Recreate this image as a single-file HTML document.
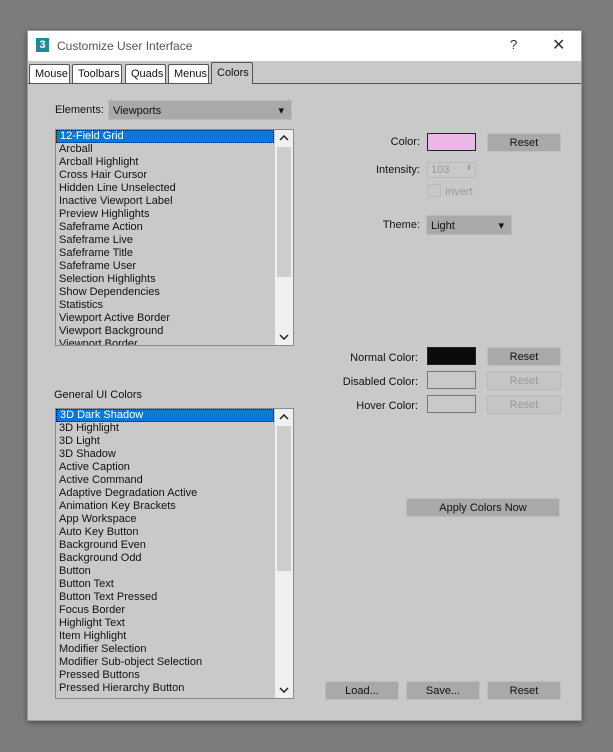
<!DOCTYPE html>
<html><head><style>
*{box-sizing:border-box;margin:0;padding:0}
body{width:613px;height:752px;background:#7d7d7d;position:relative;overflow:hidden;font-family:"Liberation Sans",sans-serif;font-size:11px;color:#111}
.a{position:absolute}
#dlg{left:27px;top:30px;width:555px;height:691px;background:#c9c9c9;border:1px solid #9a9a9a;box-shadow:0 2px 6px rgba(0,0,0,.4)}
#tb{left:0;top:0;width:553px;height:30px;background:#fff}
.tab{position:absolute;top:33px;height:19px;border:1px solid #555;border-bottom:none;background:#fff;font-size:11px;padding:3px 5px 0;border-radius:2px 2px 0 0}
.list{position:absolute;background:#c9c9c9;border:1px solid #8a8a8a;overflow:hidden}
.list > .it{height:13px;line-height:13px;padding-left:3px;font-size:11px;white-space:nowrap}
.list > .sel{background:#0a78d7;color:#fff;width:218px;border:1px dotted #000;line-height:11px}
.sb{position:absolute;right:0;top:0;bottom:0;width:18px;background:#f0f0f0}
.sb svg{position:absolute;left:4px}
.btn{position:absolute;height:19px;background:#a9a9a9;border:1px solid #bdbdbd;border-radius:2px;text-align:center;line-height:19px;font-size:11px}
.btn.dis{background:#c5c5c5;color:#999;border-color:#b8b8b8}
.lbl{position:absolute;text-align:right;font-size:11px}
.sw{position:absolute;height:18px;border:1px solid #222}
.dd{position:absolute;height:20px;background:#a9a9a9;border:1px solid #bbb;padding:4px 4px;font-size:11px}
.dd::after{content:"▾";position:absolute;right:7px;top:3px;font-size:11px}
</style></head><body>
<div id="dlg" class="a">
 <div id="tb" class="a">
  <div class="a" style="left:8px;top:7px;width:13px;height:14px;background:#1e8a96;color:#fff;font-weight:bold;font-size:11px;text-align:center;line-height:14px">3</div>
  <div class="a" style="left:29px;top:8px;font-size:12px;color:#555">Customize User Interface</div>
  <div class="a" style="left:482px;top:6px;font-size:13px;color:#333">?</div>
  <div class="a" style="left:524px;top:4px;font-size:16px;color:#333">✕</div>
 </div>
 <div class="a" style="left:0;top:52px;width:553px;height:1px;background:#555"></div>
 <div class="tab" style="left:1px;width:41px">Mouse</div>
 <div class="tab" style="left:44px;width:50px">Toolbars</div>
 <div class="tab" style="left:97px;width:41px">Quads</div>
 <div class="tab" style="left:140px;width:41px">Menus</div>
 <div class="tab" style="left:183px;top:31px;height:22px;width:42px;background:#c9c9c9;padding-top:4px">Colors</div>

 <div class="lbl" style="left:27px;top:73px">Elements:</div>
 <div class="dd" style="left:80px;top:69px;width:184px">Viewports</div>

 <div class="list" style="left:27px;top:98px;width:239px;height:217px">
  <div class="it sel">12-Field Grid</div><div class="it">Arcball</div><div class="it">Arcball Highlight</div><div class="it">Cross Hair Cursor</div><div class="it">Hidden Line Unselected</div><div class="it">Inactive Viewport Label</div><div class="it">Preview Highlights</div><div class="it">Safeframe Action</div><div class="it">Safeframe Live</div><div class="it">Safeframe Title</div><div class="it">Safeframe User</div><div class="it">Selection Highlights</div><div class="it">Show Dependencies</div><div class="it">Statistics</div><div class="it">Viewport Active Border</div><div class="it">Viewport Background</div><div class="it">Viewport Border</div>
  <div class="sb"><svg style="top:5px" width="10" height="6"><path d="M1 5L5 1L9 5" stroke="#222" stroke-width="1.5" fill="none"/></svg><div class="a" style="left:2px;top:17px;width:14px;height:130px;background:#cdcdcd"></div><svg style="bottom:5px" width="10" height="6"><path d="M1 1L5 5L9 1" stroke="#222" stroke-width="1.5" fill="none"/></svg></div>
 </div>

 <div class="a" style="left:26px;top:358px">General UI Colors</div>
 <div class="list" style="left:27px;top:377px;width:239px;height:291px">
  <div class="it sel">3D Dark Shadow</div><div class="it">3D Highlight</div><div class="it">3D Light</div><div class="it">3D Shadow</div><div class="it">Active Caption</div><div class="it">Active Command</div><div class="it">Adaptive Degradation Active</div><div class="it">Animation Key Brackets</div><div class="it">App Workspace</div><div class="it">Auto Key Button</div><div class="it">Background Even</div><div class="it">Background Odd</div><div class="it">Button</div><div class="it">Button Text</div><div class="it">Button Text Pressed</div><div class="it">Focus Border</div><div class="it">Highlight Text</div><div class="it">Item Highlight</div><div class="it">Modifier Selection</div><div class="it">Modifier Sub-object Selection</div><div class="it">Pressed Buttons</div><div class="it">Pressed Hierarchy Button</div>
  <div class="sb"><svg style="top:5px" width="10" height="6"><path d="M1 5L5 1L9 5" stroke="#222" stroke-width="1.5" fill="none"/></svg><div class="a" style="left:2px;top:17px;width:14px;height:145px;background:#cdcdcd"></div><svg style="bottom:5px" width="10" height="6"><path d="M1 1L5 5L9 1" stroke="#222" stroke-width="1.5" fill="none"/></svg></div>
 </div>

 <div class="lbl" style="left:300px;width:92px;top:105px">Color:</div>
 <div class="sw" style="left:399px;top:102px;width:49px;background:#eab8e8"></div>
 <div class="btn" style="left:459px;top:102px;width:74px">Reset</div>
 <div class="lbl" style="left:300px;width:92px;top:133px">Intensity:</div>
 <div class="a" style="left:399px;top:131px;width:49px;height:16px;border:1px solid #bbb;color:#999;padding:1px 3px;font-size:11px">103<span style="position:absolute;right:3px;top:1px;font-size:7px">⬍</span></div>
 <div class="a" style="left:400px;top:153px;width:13px;height:13px;border:1px solid #bbb"></div>
 <div class="a" style="left:417px;top:155px;color:#999">Invert</div>
 <div class="lbl" style="left:300px;width:92px;top:188px">Theme:</div>
 <div class="dd" style="left:398px;top:184px;width:86px">Light</div>

 <div class="lbl" style="left:290px;width:100px;top:321px">Normal Color:</div>
 <div class="sw" style="left:399px;top:316px;width:49px;background:#0a0a0a"></div>
 <div class="btn" style="left:459px;top:316px;width:74px">Reset</div>
 <div class="lbl" style="left:290px;width:100px;top:345px">Disabled Color:</div>
 <div class="sw" style="left:399px;top:340px;width:49px;background:#c9c9c9;border-color:#777"></div>
 <div class="btn dis" style="left:459px;top:340px;width:74px">Reset</div>
 <div class="lbl" style="left:290px;width:100px;top:369px">Hover Color:</div>
 <div class="sw" style="left:399px;top:364px;width:49px;background:#c9c9c9;border-color:#777"></div>
 <div class="btn dis" style="left:459px;top:364px;width:74px">Reset</div>

 <div class="btn" style="left:378px;top:467px;width:154px">Apply Colors Now</div>

 <div class="btn" style="left:297px;top:650px;width:74px">Load...</div>
 <div class="btn" style="left:378px;top:650px;width:74px">Save...</div>
 <div class="btn" style="left:459px;top:650px;width:74px">Reset</div>
</div>
</body></html>
